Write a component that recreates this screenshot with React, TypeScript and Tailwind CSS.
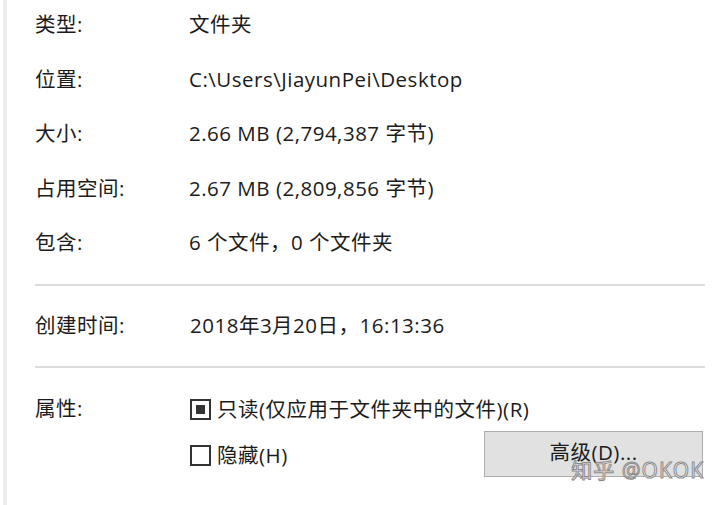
import React from "react";

const font = { fontFamily: '"Open Sans", "Noto Sans CJK SC", sans-serif' };

function Row({ label, value }: { label: string; value: string }) {
  return (
    <div className="flex h-[54.5px] items-center">
      <div className="w-[154px] shrink-0">{label}</div>
      <div>{value}</div>
    </div>
  );
}

export default function App() {
  return (
    <div
      className="relative flex h-[505px] w-[720px] overflow-hidden bg-white text-[20.5px] leading-none tracking-[0.5px] text-[#1b1b1b]"
      style={font}
    >
      <div className="ml-[3px] w-[4px] shrink-0 bg-[#ececec]" />
      <div className="flex w-[698px] flex-col pl-[28px]">
        <div className="-mt-[3px]">
          <Row label="类型:" value="文件夹" />
          <Row label="位置:" value="C:\Users\JiayunPei\Desktop" />
          <Row label="大小:" value="2.66 MB (2,794,387 字节)" />
          <Row label="占用空间:" value="2.67 MB (2,809,856 字节)" />
          <Row label="包含:" value="6 个文件，0 个文件夹" />
        </div>
        <div className="mt-[14px] h-[2px] bg-[#dcdcdc]" />
        <div className="flex h-[80px] items-center">
          <div className="w-[155px] shrink-0">创建时间:</div>
          <div>2018年3月20日，16:13:36</div>
        </div>
        <div className="h-[2px] bg-[#dcdcdc]" />
        <div className="mt-[30px] flex">
          <div className="w-[155px] shrink-0">属性:</div>
          <div className="flex flex-1 flex-col">
            <div className="mt-[1px] flex items-center gap-[6px]">
              <div className="flex h-[21px] w-[21px] items-center justify-center border-[2px] border-[#333]">
                <div className="h-[9px] w-[9px] bg-[#333]" />
              </div>
              <span>只读(仅应用于文件夹中的文件)(R)</span>
            </div>
            <div className="mt-[11px] flex items-start">
              <div className="mt-[14px] flex items-center gap-[6px]">
                <div className="h-[21px] w-[21px] border-[2px] border-[#333]" />
                <span>隐藏(H)</span>
              </div>
              <div className="ml-auto mr-[2px] flex h-[46px] w-[219px] items-center justify-center border border-[#adadad] bg-[#e1e1e1] pb-[2px]">
                高级(D)...
              </div>
            </div>
          </div>
        </div>
      </div>
      <div
        className="absolute right-[16px] top-[460px] text-[21px] leading-none tracking-[1px] text-white"
        style={{ WebkitTextStroke: "1px #8a8a8a" }}
      >
        知乎 @OKOK
      </div>
    </div>
  );
}
